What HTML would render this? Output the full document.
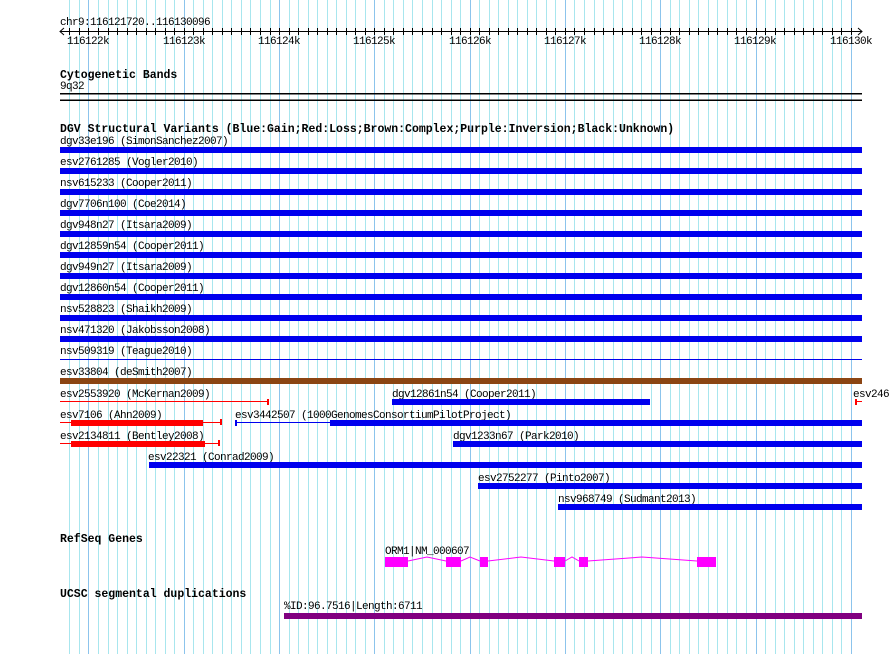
<!DOCTYPE html>
<html><head><meta charset="utf-8"><style>
html,body{margin:0;padding:0;background:#fff;}
svg{display:block;}
text{font-family:"Liberation Mono",monospace;font-size:11px;letter-spacing:-0.6px;fill:#000;}
.h{font-weight:bold;font-size:11.5px;letter-spacing:0;}
</style></head><body>
<svg id="s" width="890" height="654" xmlns="http://www.w3.org/2000/svg" shape-rendering="crispEdges">
<g id="grid"></g>
<g id="ticks"></g>
<text x="60" y="25">chr9:116121720..116130096</text>
<line x1="60" y1="31.5" x2="862" y2="31.5" stroke="#000"/>
<polyline points="64,28 60,31.5 64,35" fill="none" stroke="#000" shape-rendering="auto"/>
<polyline points="858,28 862,31.5 858,35" fill="none" stroke="#000" shape-rendering="auto"/>
<g text-anchor="middle">
<text x="88" y="44">116122k</text><text x="184" y="44">116123k</text><text x="279" y="44">116124k</text><text x="374" y="44">116125k</text><text x="470" y="44">116126k</text><text x="565" y="44">116127k</text><text x="660" y="44">116128k</text><text x="755" y="44">116129k</text><text x="851" y="44">116130k</text>
</g>
<text class="h" x="60" y="78">Cytogenetic Bands</text>
<text x="60" y="89">9q32</text>
<rect x="60" y="93" width="802" height="1.5" fill="#000"/>
<rect x="60" y="99.5" width="802" height="1.5" fill="#000"/>
<text class="h" x="60" y="132">DGV Structural Variants (Blue:Gain;Red:Loss;Brown:Complex;Purple:Inversion;Black:Unknown)</text>
<g fill="#0000ee">
<rect x="60" y="147" width="802" height="6"/><rect x="60" y="168" width="802" height="6"/><rect x="60" y="189" width="802" height="6"/><rect x="60" y="210" width="802" height="6"/><rect x="60" y="231" width="802" height="6"/><rect x="60" y="252" width="802" height="6"/><rect x="60" y="273" width="802" height="6"/><rect x="60" y="294" width="802" height="6"/><rect x="60" y="315" width="802" height="6"/><rect x="60" y="336" width="802" height="6"/>
<rect x="60" y="359" width="802" height="1"/>
</g>
<text x="60" y="144">dgv33e196 (SimonSanchez2007)</text>
<text x="60" y="165">esv2761285 (Vogler2010)</text>
<text x="60" y="186">nsv615233 (Cooper2011)</text>
<text x="60" y="207">dgv7706n100 (Coe2014)</text>
<text x="60" y="228">dgv948n27 (Itsara2009)</text>
<text x="60" y="249">dgv12859n54 (Cooper2011)</text>
<text x="60" y="270">dgv949n27 (Itsara2009)</text>
<text x="60" y="291">dgv12860n54 (Cooper2011)</text>
<text x="60" y="312">nsv528823 (Shaikh2009)</text>
<text x="60" y="333">nsv471320 (Jakobsson2008)</text>
<text x="60" y="354">nsv509319 (Teague2010)</text>
<text x="60" y="375">esv33804 (deSmith2007)</text>
<rect x="60" y="378" width="802" height="6" fill="#8b4513"/>
<text x="60" y="397">esv2553920 (McKernan2009)</text>
<rect x="60" y="401" width="208" height="1" fill="#f00"/><rect x="267" y="399" width="2" height="6" fill="#f00"/>
<text x="392" y="397">dgv12861n54 (Cooper2011)</text>
<rect x="392" y="399" width="258" height="6" fill="#0000ee"/>
<text x="853" y="397">esv246</text>
<rect x="855" y="399" width="2" height="6" fill="#f00"/><rect x="855" y="401" width="7" height="1" fill="#f00"/>
<text x="60" y="418">esv7106 (Ahn2009)</text>
<rect x="60" y="422" width="161" height="1" fill="#f00"/><rect x="71" y="420" width="132" height="6" fill="#f00"/><rect x="220" y="419" width="2" height="6" fill="#f00"/>
<text x="235" y="418">esv3442507 (1000GenomesConsortiumPilotProject)</text>
<rect x="235" y="422" width="95" height="1" fill="#0000ee"/><rect x="235" y="420" width="2" height="6" fill="#0000ee"/><rect x="330" y="420" width="532" height="6" fill="#0000ee"/>
<text x="60" y="439">esv2134811 (Bentley2008)</text>
<rect x="60" y="443" width="159" height="1" fill="#f00"/><rect x="71" y="441" width="134" height="6" fill="#f00"/><rect x="218" y="440" width="2" height="6" fill="#f00"/>
<text x="453" y="439">dgv1233n67 (Park2010)</text>
<rect x="453" y="441" width="409" height="6" fill="#0000ee"/>
<text x="148" y="460">esv22321 (Conrad2009)</text>
<rect x="149" y="462" width="713" height="6" fill="#0000ee"/>
<text x="478" y="481">esv2752277 (Pinto2007)</text>
<rect x="478" y="483" width="384" height="6" fill="#0000ee"/>
<text x="558" y="502">nsv968749 (Sudmant2013)</text>
<rect x="558" y="504" width="304" height="6" fill="#0000ee"/>
<text class="h" x="60" y="542">RefSeq Genes</text>
<text x="385" y="554">ORM1|NM_000607</text>
<polyline shape-rendering="auto" fill="none" stroke="#f0f" points="408,561 427,557 446,561"/>
<polyline shape-rendering="auto" fill="none" stroke="#f0f" points="461,561 470,557 480,561"/>
<polyline shape-rendering="auto" fill="none" stroke="#f0f" points="488,561 521,557 554,561"/>
<polyline shape-rendering="auto" fill="none" stroke="#f0f" points="565,561 572,557 579,561"/>
<polyline shape-rendering="auto" fill="none" stroke="#f0f" points="588,561 642,557 697,561"/>
<g fill="#f0f">
<rect x="385" y="557" width="23" height="10"/><rect x="446" y="557" width="15" height="10"/><rect x="480" y="557" width="8" height="10"/><rect x="554" y="557" width="11" height="10"/><rect x="579" y="557" width="9" height="10"/><rect x="697" y="557" width="19" height="10"/>
</g>
<text class="h" x="60" y="597">UCSC segmental duplications</text>
<text x="284" y="609">%ID:96.7516|Length:6711</text>
<rect x="284" y="613" width="578" height="6" fill="#800080"/>
</svg>
<script>
(function(){
var ns="http://www.w3.org/2000/svg",g=document.getElementById("grid"),t=document.getElementById("ticks");
for(var n=0;n<=82;n++){
 var x=Math.round(69.4+9.53*n)+0.5;
 var major=((n-2)%10===0);
 var l=document.createElementNS(ns,"line");
 l.setAttribute("x1",x);l.setAttribute("x2",x);l.setAttribute("y1",0);l.setAttribute("y2",654);
 l.setAttribute("stroke",major?"#8cc4ec":"#a8e6ee");
 g.appendChild(l);
 var k=document.createElementNS(ns,"line");
 k.setAttribute("x1",x);k.setAttribute("x2",x);k.setAttribute("y1",28);k.setAttribute("y2",35);
 k.setAttribute("stroke","#000");
 t.appendChild(k);
}
})();
</script>
</body></html>
